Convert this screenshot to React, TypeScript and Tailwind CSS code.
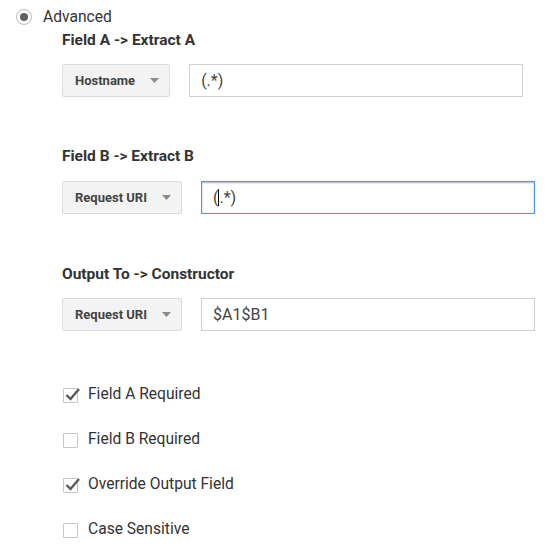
import React from "react";

function Arrow() {
  return (
    <svg width="9" height="5" viewBox="0 0 9 5" className="shrink-0">
      <path d="M0 0 L9 0 L4.5 5 Z" fill="#8a8a8a" />
    </svg>
  );
}

function Select({ label }: { label: string }) {
  return (
    <div className="flex h-[33px] items-center gap-[15px] rounded-[2px] border border-[#dcdcdc] bg-[#f3f3f3] pl-[12px] pr-[10px] text-[13px] font-bold text-[#444]">
      <span>{label}</span>
      <Arrow />
    </div>
  );
}

function Input({ children, focused }: { children: React.ReactNode; focused?: boolean }) {
  return (
    <div
      className={
        "flex h-[33px] w-[334px] items-center pl-[11px] text-[16px] text-[#444] " +
        (focused
          ? "border border-[#4d90fe] shadow-[inset_0_1px_2px_rgba(0,0,0,0.3)]"
          : "border border-[#d0d0d0]")
      }
    >
      {children}
    </div>
  );
}

function Check({ checked, label }: { checked?: boolean; label: string }) {
  return (
    <div className="flex h-[20px] items-center gap-[10px]">
      <div className="relative ml-[1px] h-[15px] w-[15px] rounded-[1px] border border-[#c6c6c6] bg-white">
        {checked && (
          <svg width="18" height="16" viewBox="0 0 18 16" className="absolute left-[0px] top-[-3px]">
            <path d="M2.5 9 L6.5 13 L15 3" fill="none" stroke="#5a5a5a" strokeWidth="2.4" />
          </svg>
        )}
      </div>
      <span className="text-[15.6px] text-[#333]">{label}</span>
    </div>
  );
}

export default function App() {
  return (
    <div className="h-[550px] w-[550px] overflow-hidden bg-white" style={{ fontFamily: "Roboto, 'Liberation Sans', sans-serif" }}>
      <div className="ml-[16px] mt-[8px] flex h-[18px] items-center gap-[11px]">
        <div className="flex h-[16px] w-[16px] items-center justify-center rounded-full border border-[#bdbdbd] bg-white">
          <div className="h-[8px] w-[8px] rounded-full bg-[#616161]" />
        </div>
        <span className="text-[15.6px] leading-[18px] text-[#333]">Advanced</span>
      </div>
      <div className="ml-[62px]">
        <div className="mt-[4px] text-[15.5px] font-bold leading-[20px] text-[#333]">Field A -&gt; Extract A</div>
        <div className="mt-[14px] flex gap-[19px]">
          <Select label="Hostname" />
          <Input>(.*)</Input>
        </div>
        <div className="mt-[49px] text-[15.5px] font-bold leading-[20px] text-[#333]">Field B -&gt; Extract B</div>
        <div className="mt-[15px] flex gap-[19px]">
          <Select label="Request URI" />
          <Input focused>
            <span>(</span>
            <span className="inline-block h-[17px] w-[1px] bg-black" />
            <span>.*)</span>
          </Input>
        </div>
        <div className="mt-[50px] text-[15.5px] font-bold leading-[20px] text-[#333]">Output To -&gt; Constructor</div>
        <div className="mt-[14px] flex gap-[19px]">
          <Select label="Request URI" />
          <Input>$A1$B1</Input>
        </div>
        <div className="mt-[54px] flex flex-col gap-[25px]">
          <Check checked label="Field A Required" />
          <Check label="Field B Required" />
          <Check checked label="Override Output Field" />
          <Check label="Case Sensitive" />
        </div>
      </div>
    </div>
  );
}
